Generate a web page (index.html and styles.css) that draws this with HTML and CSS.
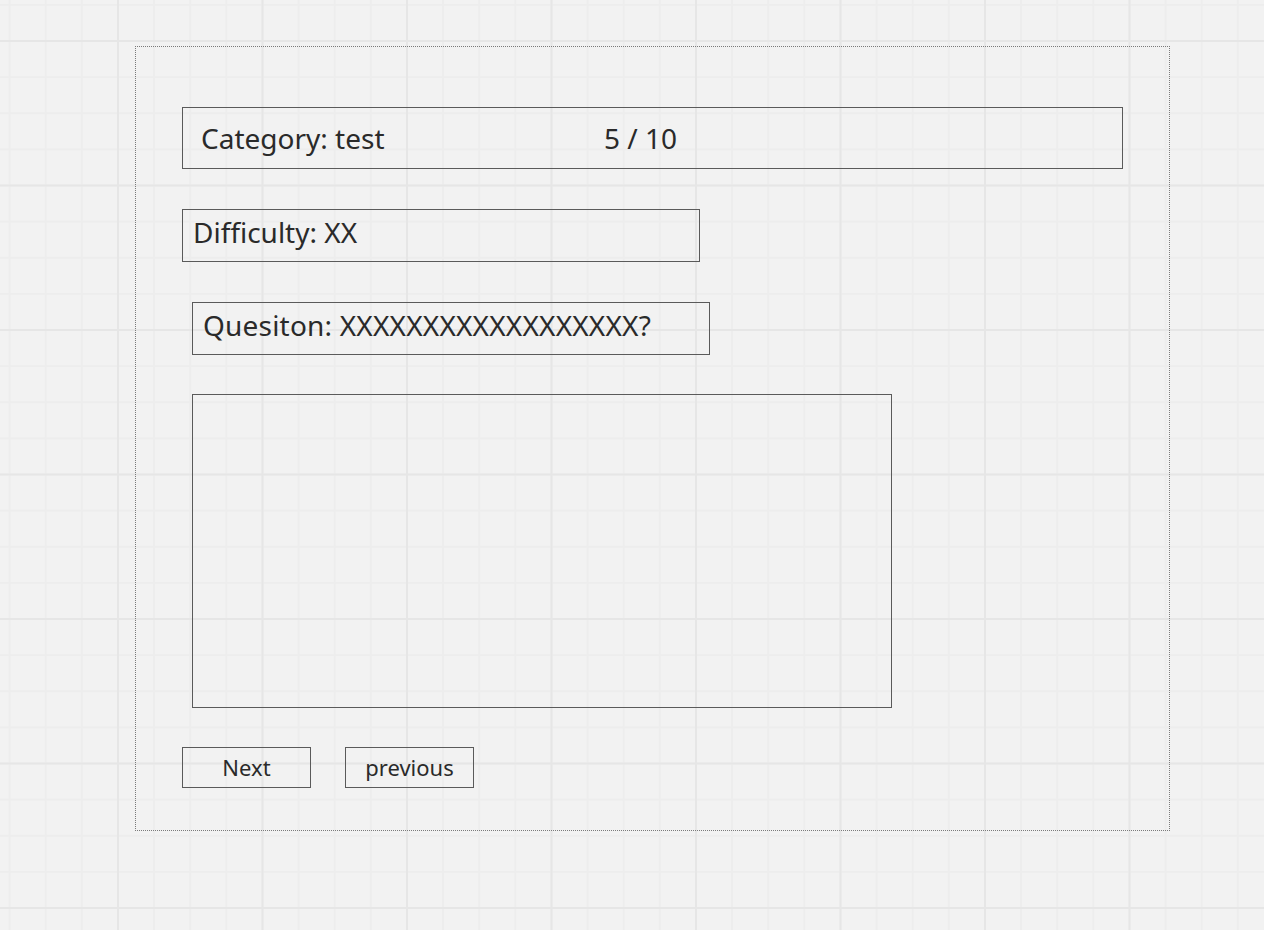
FILE: index.html
```html
<!DOCTYPE html>
<html lang="en">
<head>
<meta charset="utf-8">
<title>Quiz wireframe</title>
<link rel="stylesheet" href="styles.css">
</head>
<body>
<div class="frame">
  <div class="header-box">
    <span class="category">Category: test</span>
    <span class="count">5 / 10</span>
  </div>
  <div class="field difficulty">Difficulty: XX</div>
  <div class="field question">Quesiton: XXXXXXXXXXXXXXXXXX?</div>
  <div class="answer-box"></div>
  <div class="buttons">
    <button class="btn">Next</button>
    <button class="btn">previous</button>
  </div>
</div>
</body>
</html>
```
FILE: styles.css
```css
html, body {
  margin: 0;
  padding: 0;
}
body {
  width: 1264px;
  height: 930px;
  overflow: hidden;
  background-color: #f2f2f2;
  background-image:
    linear-gradient(to right, #e6e6e6 0, #e6e6e6 2px, transparent 2px),
    linear-gradient(to bottom, #e6e6e6 0, #e6e6e6 2px, transparent 2px),
    linear-gradient(to right, #ededed 0, #ededed 2px, transparent 2px),
    linear-gradient(to bottom, #ededed 0, #ededed 2px, transparent 2px);
  background-size: 144.5px 144.5px, 144.5px 144.5px, 36.125px 36.125px, 36.125px 36.125px;
  background-position: 117px 40px, 117px 40px, 8.6px 3.9px, 8.6px 3.9px;
  font-family: "Noto Sans", "Open Sans", sans-serif;
  color: #2a2a2a;
}
.frame {
  box-sizing: border-box;
  margin: 46px 0 0 135px;
  width: 1035px;
  height: 785px;
  border: 1px dotted #7a7a7a;
  padding: 60px 0 0 46px;
  display: flex;
  flex-direction: column;
  align-items: flex-start;
}
.header-box {
  box-sizing: border-box;
  width: 941px;
  height: 62px;
  border: 1px solid #5a5a5a;
  display: flex;
  align-items: center;
  padding-left: 18px;
  font-size: 28px;
}
.category {
  width: 403px;
}
.field {
  box-sizing: border-box;
  width: 518px;
  height: 53px;
  border: 1px solid #5a5a5a;
  display: flex;
  align-items: center;
  padding-left: 10px;
  padding-bottom: 7px;
  font-size: 28px;
}
.question {
  letter-spacing: 0.2px;
}
.difficulty {
  margin-top: 40px;
}
.question {
  margin-top: 40px;
  margin-left: 10px;
}
.answer-box {
  box-sizing: border-box;
  margin-top: 39px;
  margin-left: 10px;
  width: 700px;
  height: 314px;
  border: 1px solid #5a5a5a;
}
.buttons {
  margin-top: 39px;
  display: flex;
  gap: 34px;
}
.btn {
  box-sizing: border-box;
  width: 129px;
  height: 41px;
  border: 1px solid #5a5a5a;
  background: transparent;
  font-family: "Noto Sans", "Open Sans", sans-serif;
  font-size: 22px;
  color: #2a2a2a;
  padding: 0 0 2px;
}
```
